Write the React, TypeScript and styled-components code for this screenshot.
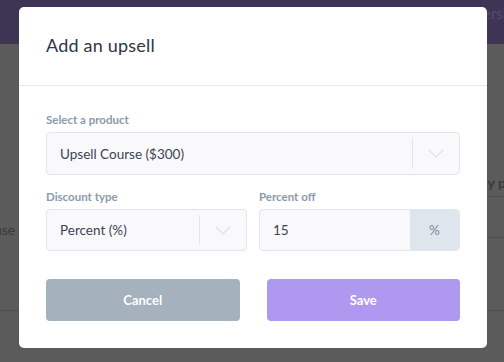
import React from "react";
import styled, { createGlobalStyle } from "styled-components";

const Global = createGlobalStyle`
  html, body { margin: 0; padding: 0; }
  body { width: 504px; height: 362px; overflow: hidden; font-family: Lato, "Open Sans", sans-serif; }
`;

const Page = styled.div`
  position: relative;
  width: 504px;
  height: 362px;
  background: #5b5b5b;
  overflow: hidden;
`;

const TopBar = styled.div`
  height: 44px;
  background: #3e3453;
  display: flex;
  align-items: flex-start;
  gap: 24px;
  padding: 4px 0 0 108px;
  box-sizing: border-box;
  white-space: nowrap;
  overflow: hidden;
`;

const NavItem = styled.span`
  font-size: 15px;
  color: #574e6e;
  line-height: 18px;
`;

const BackContent = styled.div`
  position: relative;
  height: 318px;
`;

const BackText = styled.span<{ $bold?: boolean }>`
  position: absolute;
  font-size: 14px;
  color: #3a3a3a;
  font-weight: ${(p) => (p.$bold ? 700 : 400)};
  white-space: nowrap;
`;

const BackLine = styled.div`
  position: absolute;
  height: 1px;
  background: #4e4e4e;
`;

const Modal = styled.div`
  position: absolute;
  left: 19px;
  top: 7px;
  width: 468px;
  height: 341px;
  background: #ffffff;
  border-radius: 5px;
  display: flex;
  flex-direction: column;
  box-sizing: border-box;
`;

const Header = styled.div`
  flex-shrink: 0;
  height: 79px;
  border-bottom: 1px solid #e3e7ee;
  box-sizing: border-box;
  display: flex;
  align-items: center;
  padding: 0 27px 2px;
`;

const Title = styled.h2`
  margin: 0;
  font-size: 18px;
  font-weight: 400;
  color: #2f3546;
  letter-spacing: 0.2px;
`;

const Body = styled.div`
  padding: 27px 27px 27px;
  display: flex;
  flex-direction: column;
`;

const Field = styled.div`
  display: flex;
  flex-direction: column;
  flex: 1;
  min-width: 0;
`;

const Label = styled.label`
  font-size: 11.5px;
  font-weight: 700;
  color: #8a9aab;
  line-height: 14px;
  margin-bottom: 5px;
`;

const Row = styled.div`
  display: flex;
  gap: 12px;
  margin-top: 15px;
`;

const Box = styled.div<{ $h: number }>`
  height: ${(p) => p.$h}px;
  border: 1px solid #e3e6f0;
  background: #f9f9fc;
  border-radius: 4px;
  box-sizing: border-box;
  display: flex;
  align-items: center;
  overflow: hidden;
`;

const Value = styled.span`
  flex: 1;
  padding-left: 13px;
  font-size: 13.5px;
  color: #3b4353;
`;

const Sep = styled.span`
  width: 1px;
  align-self: stretch;
  margin: 5px 0;
  background: #e3e6f0;
`;

const Chevron = styled.span`
  width: 46px;
  display: flex;
  justify-content: center;
  align-items: center;
`;

const Addon = styled.span`
  width: 49px;
  align-self: stretch;
  background: #dfe5ec;
  color: #7d8a98;
  font-size: 13.5px;
  display: flex;
  align-items: center;
  justify-content: center;
`;

const Buttons = styled.div`
  display: flex;
  gap: 27px;
  margin-top: 28px;
`;

const Button = styled.button<{ $bg: string }>`
  flex: 1;
  height: 42px;
  border: none;
  border-radius: 4px;
  background: ${(p) => p.$bg};
  color: #ffffff;
  font-family: Lato, "Open Sans", sans-serif;
  font-size: 13px;
  font-weight: 700;
`;

const ChevronIcon = () => (
  <svg width="16" height="9" viewBox="0 0 16 9">
    <path d="M1 1 L8 8 L15 1" fill="none" stroke="#dde1e8" strokeWidth="1.2" />
  </svg>
);

export default function App() {
  return (
    <>
      <Global />
      <Page>
        <TopBar>
          <NavItem>Dashboard</NavItem>
          <NavItem>Editor</NavItem>
          <NavItem>Storefront</NavItem>
          <NavItem>Products</NavItem>
          <NavItem>Memberships</NavItem>
        </TopBar>
        <BackContent>
          <BackText style={{ left: -6, top: 177 }}>use i</BackText>
          <BackText $bold style={{ left: 484, top: 130 }}>ly p</BackText>
          <BackLine style={{ left: 487, right: 0, top: 152 }} />
          <BackLine style={{ left: 487, right: 0, top: 193 }} />
          <BackLine style={{ left: 0, right: 0, top: 266 }} />
        </BackContent>
        <Modal>
          <Header>
            <Title>Add an upsell</Title>
          </Header>
          <Body>
            <Field>
              <Label>Select a product</Label>
              <Box $h={43}>
                <Value>Upsell Course ($300)</Value>
                <Sep />
                <Chevron>
                  <ChevronIcon />
                </Chevron>
              </Box>
            </Field>
            <Row>
              <Field>
                <Label>Discount type</Label>
                <Box $h={42}>
                  <Value>Percent (%)</Value>
                  <Sep />
                  <Chevron>
                    <ChevronIcon />
                  </Chevron>
                </Box>
              </Field>
              <Field>
                <Label>Percent off</Label>
                <Box $h={42}>
                  <Value>15</Value>
                  <Addon>%</Addon>
                </Box>
              </Field>
            </Row>
            <Buttons>
              <Button $bg="#a5b1bd">Cancel</Button>
              <Button $bg="#af98ef">Save</Button>
            </Buttons>
          </Body>
        </Modal>
      </Page>
    </>
  );
}
